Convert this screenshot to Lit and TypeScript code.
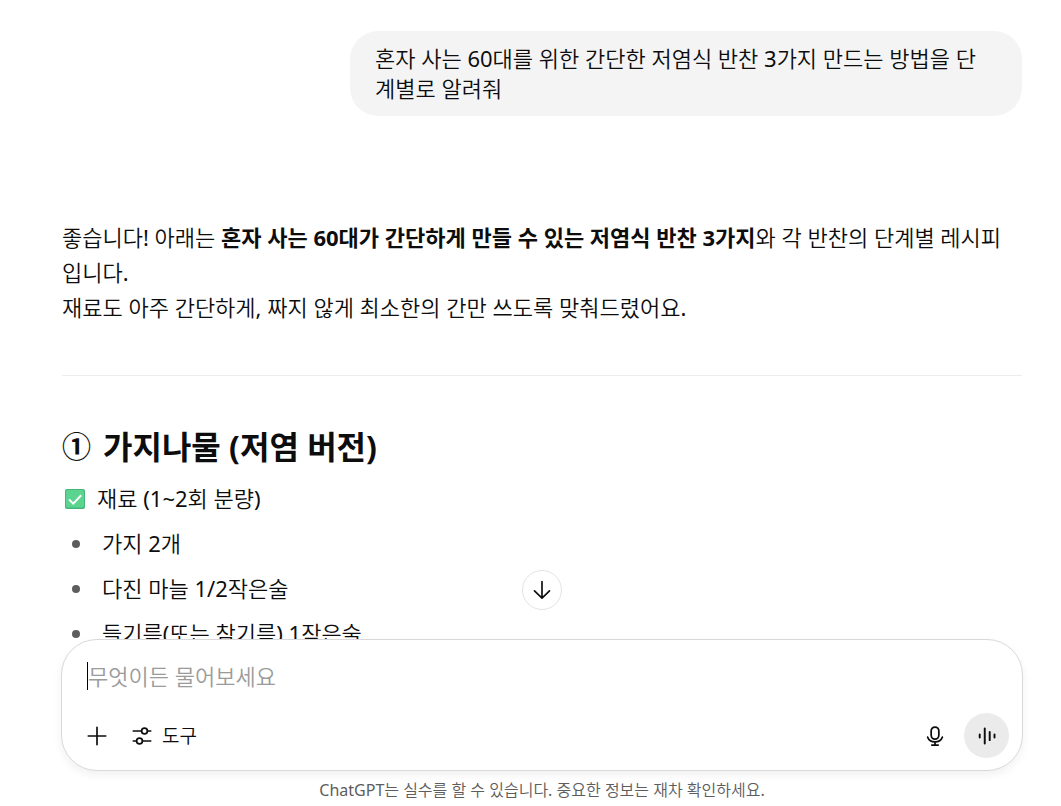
import { LitElement, html, css, svg } from "lit";
import { customElement, state } from "lit/decorators.js";

const stroke = (paths: unknown) => html`
  <svg class="icon" viewBox="0 0 24 24" fill="none" stroke="currentColor"
    stroke-linecap="round" stroke-linejoin="round" aria-hidden="true">${paths}</svg>`;

const icons = {
  down: stroke(svg`<path d="M12 2v19.5M3 13l9 8.7 9-8.7"/>`),
  plus: stroke(svg`<path d="M12 1.5v21M1.5 12h21"/>`),
  tools: stroke(svg`<path d="M1.5 6h10M18.5 6h4M1.5 18h4M12.5 18h10"/>
    <circle cx="15" cy="6" r="3.5"/><circle cx="9" cy="18" r="3.5"/>`),
  mic: stroke(svg`<rect x="7.4" y="1.2" width="9.2" height="14.6" rx="4.6"/>
    <path d="M3.2 13.4c1.2 3.4 4.6 5.6 8.8 5.6s7.6-2.2 8.8-5.6M12 19v3.8M8.2 22.8h7.6"/>`),
  voice: stroke(svg`<path d="M2.3 10v4M9 2v20M15.6 6.5v11M22 10v4"/>`),
};

@customElement("chat-thread")
export class ChatThread extends LitElement {
  static styles = css`
    :host { display: block; }
    .bubble {
      box-sizing: border-box;
      width: fit-content;
      max-width: 70%;
      margin-left: auto;
      padding: 12px 32px 13px 25px;
      border-radius: 28px;
      background: #f4f4f4;
      line-height: 30px;
    }
    .answer { padding-top: 104px; }
    p { margin: 0; padding-right: 12px; line-height: 35px; }
    strong, h2 { font-family: "Noto Sans", "Noto Sans CJK KR", sans-serif; font-weight: 700; }
    hr { height: 1px; margin: 50px 0 49px; border: 0; background: #ededed; }
    h2 {
      display: flex;
      align-items: center;
      gap: 12px;
      margin: 0 0 12px;
      font-size: 32px;
      line-height: 44px;
    }
    .number { font-size: 29px; }
    h3 {
      display: flex;
      align-items: center;
      gap: 12px;
      margin: 0;
      padding-left: 3px;
      font-size: 22px;
      line-height: 35px;
      font-weight: inherit;
    }
    .check { width: 20px; height: 20px; }
    ul { margin: 0; padding: 5px 0 0 10px; list-style: none; }
    li { display: flex; align-items: center; gap: 22px; line-height: 35px; padding: 5px 0; }
    li::before { content: ""; width: 8px; height: 8px; border-radius: 50%; background: #5d5d5d; }
  `;

  private ingredients = ["가지 2개", "다진 마늘 1/2작은술", "들기름(또는 참기름) 1작은술"];

  render() {
    return html`
      <div class="bubble">혼자 사는 60대를 위한 간단한 저염식 반찬 3가지 만드는 방법을 단계별로 알려줘</div>
      <article class="answer">
        <p>좋습니다! 아래는 <strong>혼자 사는 60대가 간단하게 만들 수 있는 저염식 반찬 3가지</strong>와 각 반찬의 단계별 레시피입니다.<br>재료도 아주 간단하게, 짜지 않게 최소한의 간만 쓰도록 맞춰드렸어요.</p>
        <hr>
        <h2><span class="number">①</span> <span>가지나물 (저염 버전)</span></h2>
        <h3>
          <svg class="check" viewBox="0 0 20 20" role="img" aria-label="✅">
            <rect width="20" height="20" rx="2" fill="#43b77a"/>
            <rect x="1" y="1" width="18" height="17.5" rx="1.5" fill="#5bd48f"/>
            <path d="M4 10.4l4.2 4.2 8-8.4" fill="none" stroke="#fff" stroke-width="2"/>
          </svg>
          재료 (1~2회 분량)
        </h3>
        <ul>${this.ingredients.map((item) => html`<li>${item}</li>`)}</ul>
      </article>`;
  }
}

@customElement("chat-composer")
export class ChatComposer extends LitElement {
  static styles = css`
    :host { display: block; position: relative; }
    button {
      display: flex;
      align-items: center;
      justify-content: center;
      padding: 0;
      border: 0;
      background: none;
      color: #0d0d0d;
      font: inherit;
      cursor: pointer;
    }
    .icon { width: 20px; height: 20px; stroke-width: 2; }
    .scroll {
      position: absolute;
      left: 50%;
      bottom: 100%;
      width: 40px;
      height: 40px;
      margin: 0 0 29px -20px;
      border: 1px solid #e3e3e3;
      border-radius: 50%;
      background: #fff;
    }
    .box {
      display: flex;
      flex-direction: column;
      gap: 23px;
      padding: 22px 13px 12px;
      border: 1px solid #d9d9d9;
      border-radius: 36px;
      background: #fff;
      box-shadow: 0 4px 10px rgba(0, 0, 0, 0.06);
    }
    .field { display: flex; align-items: center; padding: 0 12px; }
    .caret { width: 1px; height: 28px; background: #000; }
    input {
      flex: 1;
      min-width: 0;
      height: 28px;
      padding: 0;
      border: 0;
      outline: 0;
      background: none;
      color: #0d0d0d;
      font: inherit;
    }
    input::placeholder { color: #9b9b9b; opacity: 1; }
    .bar { display: flex; align-items: center; }
    .add { width: 44px; height: 44px; }
    .tools { gap: 10px; height: 44px; margin-left: 13px; font-size: 19px; }
    .mic { width: 44px; height: 44px; margin-left: auto; }
    .voice { width: 45px; height: 45px; margin-left: 7px; border-radius: 50%; background: #ebebeb; }
    .voice .icon { width: 18px; height: 18px; stroke-width: 2.6; }
    .mic .icon { width: 20px; height: 22px; stroke-width: 2.1; }
  `;

  @state() private draft = "";

  render() {
    return html`
      <button class="scroll" aria-label="맨 아래로">${icons.down}</button>
      <form class="box" @submit=${(e: Event) => e.preventDefault()}>
        <div class="field">
          ${this.draft ? "" : html`<span class="caret"></span>`}
          <input aria-label="무엇이든 물어보세요" placeholder="무엇이든 물어보세요" .value=${this.draft}
            @input=${(e: Event) => (this.draft = (e.target as HTMLInputElement).value)}>
        </div>
        <div class="bar">
          <button class="add" type="button" aria-label="추가">${icons.plus}</button>
          <button class="tools" type="button">${icons.tools}도구</button>
          <button class="mic" type="button" aria-label="음성 입력">${icons.mic}</button>
          <button class="voice" type="button" aria-label="음성 모드">${icons.voice}</button>
        </div>
      </form>`;
  }
}

@customElement("app-root")
export class AppRoot extends LitElement {
  static styles = css`
    :host {
      display: flex;
      flex-direction: column;
      box-sizing: border-box;
      height: 100vh;
      padding: 0 38px 0 61px;
      overflow: hidden;
      background: #fff;
      color: #0d0d0d;
      font: 400 22px/30px "Noto Sans", "Noto Sans CJK KR DemiLight", "Noto Sans CJK KR", sans-serif;
    }
    main { flex: 1; min-height: 0; overflow: hidden; padding: 31px 1px 0; }
    footer { padding: 7px 0 4px; text-align: center; font-size: 16px; line-height: 24px; color: #5d5d5d; }
  `;

  render() {
    return html`
      <main><chat-thread></chat-thread></main>
      <chat-composer></chat-composer>
      <footer>ChatGPT는 실수를 할 수 있습니다. 중요한 정보는 재차 확인하세요.</footer>`;
  }
}
